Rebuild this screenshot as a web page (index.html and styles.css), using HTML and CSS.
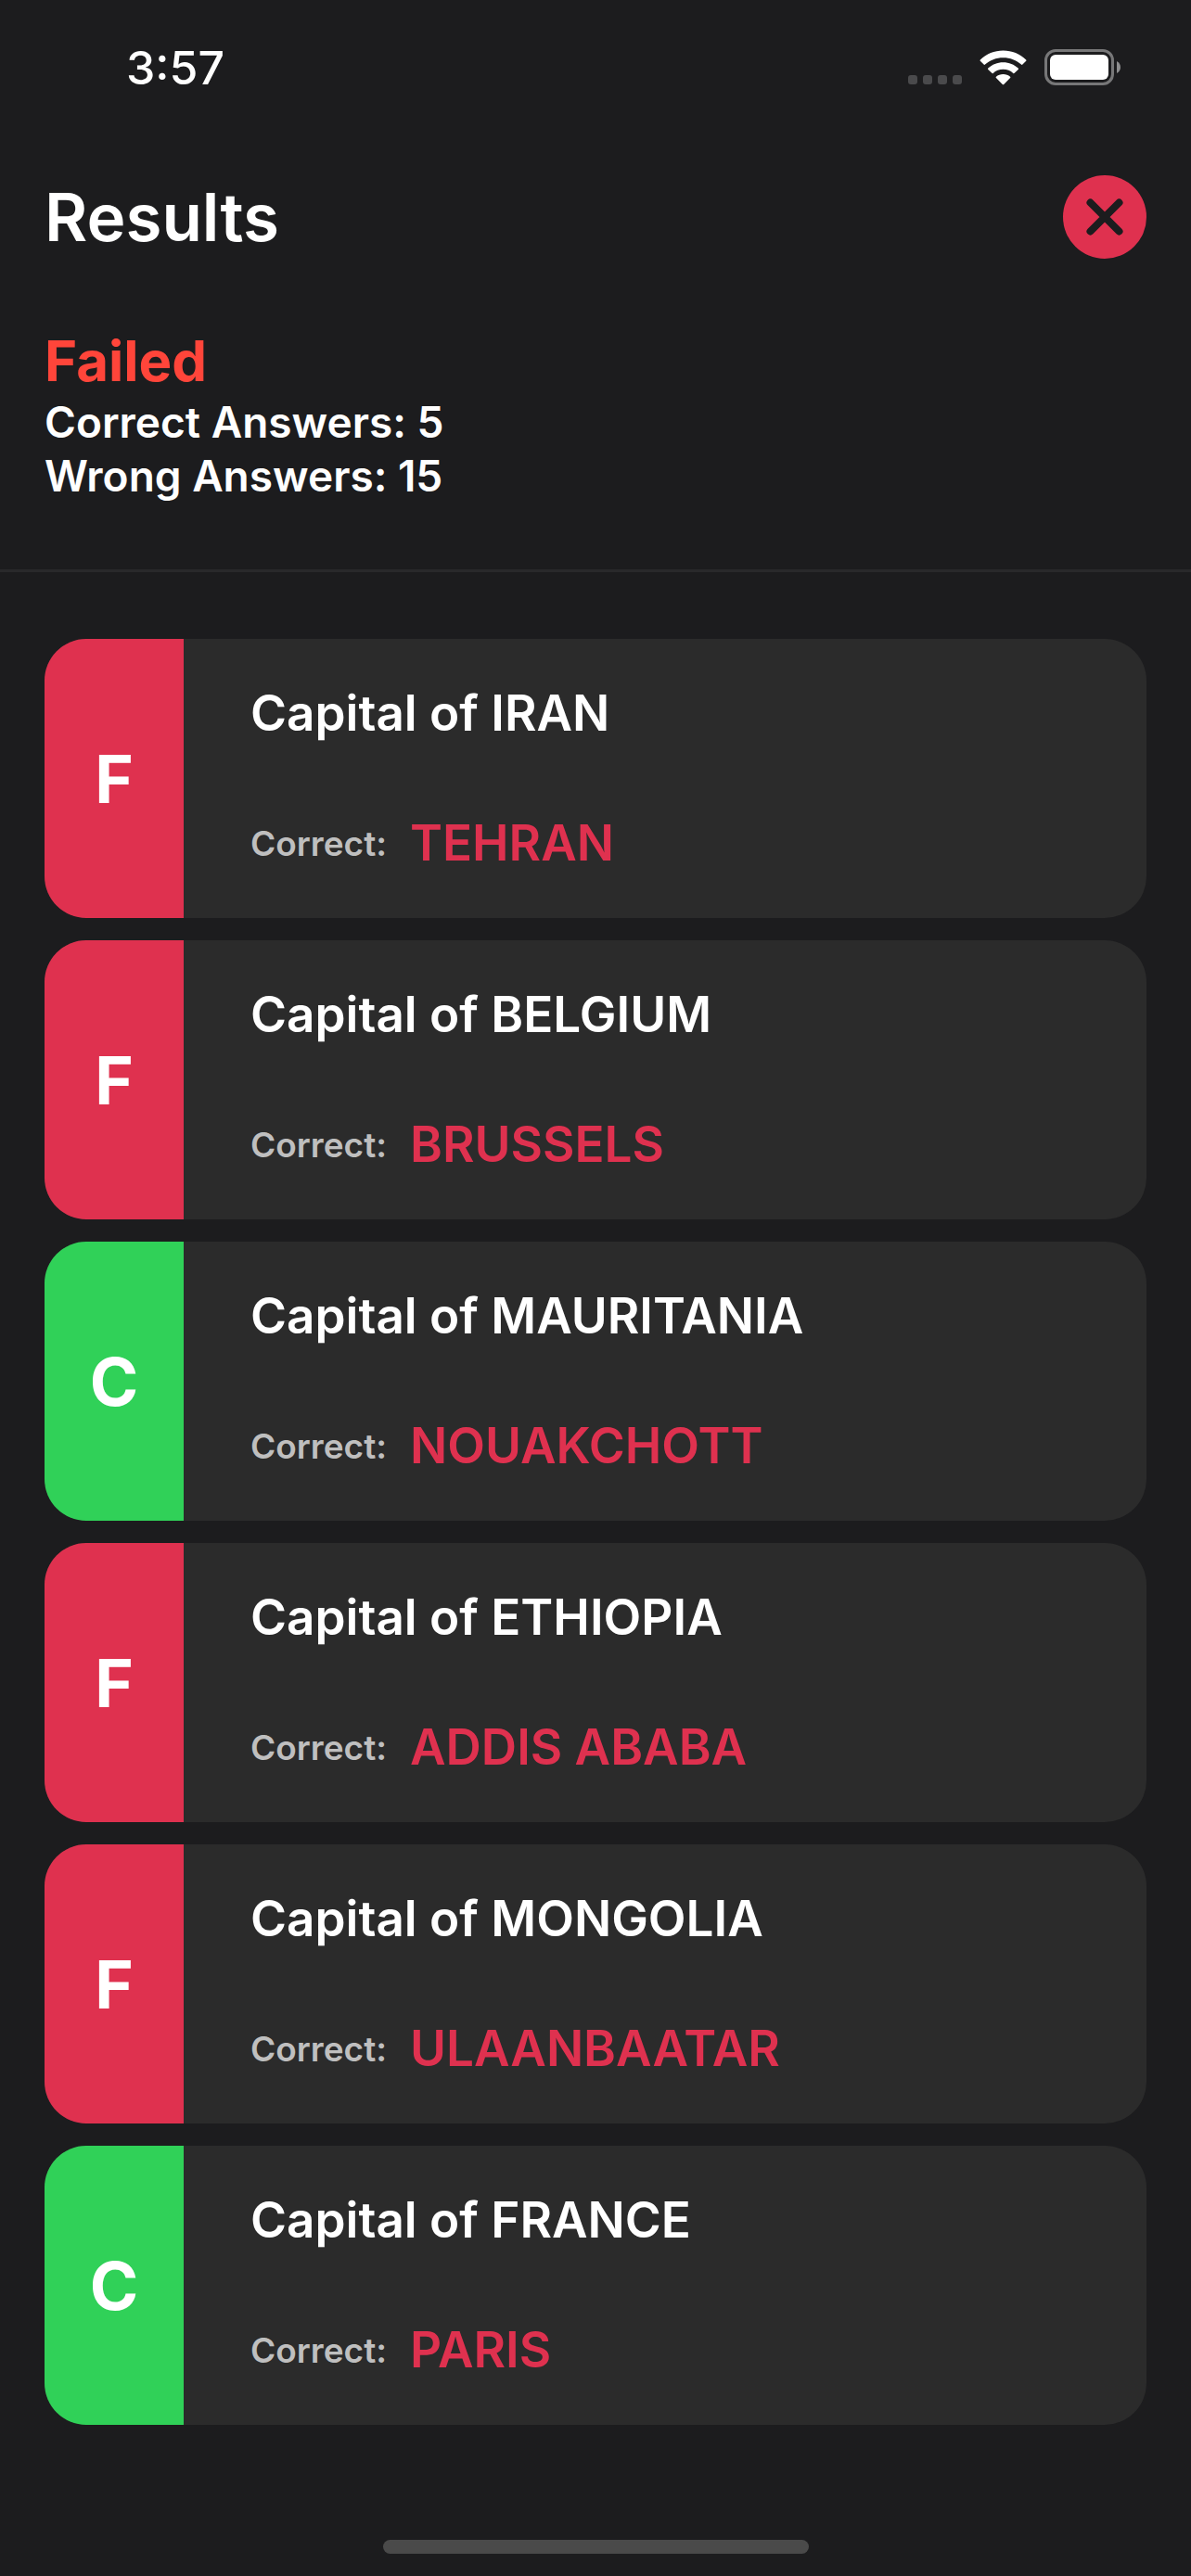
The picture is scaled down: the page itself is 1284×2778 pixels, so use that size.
FILE: index.html
```html
<!DOCTYPE html>
<html lang="en">
<head>
  <meta charset="utf-8">
  <meta name="viewport" content="width=device-width, initial-scale=1">
  <title>Results</title>
  <link rel="stylesheet" href="styles.css">
</head>
<body>
  <div class="status">
    <span class="clock">3:57</span>
    <div class="indicators">
      <svg class="signal" width="58" height="10" viewBox="0 0 58 10" aria-hidden="true">
        <rect width="10" height="10" rx="3"/><rect x="16" width="10" height="10" rx="3"/><rect x="32" width="10" height="10" rx="3"/><rect x="48" width="10" height="10" rx="3"/>
      </svg>
      <svg class="wifi" width="51" height="38" viewBox="0 0 51 38" aria-hidden="true">
        <path d="M25.500 .5C35 .5 43.700 4.200 50.200 10.400Q50.900 11.100 50.200 11.800L46.400 15.600Q45.700 16.300 45 15.600C39.900 10.800 33 8.200 25.500 8.200S11.100 10.800 6 15.600Q5.300 16.300 4.600 15.600L.8 11.800Q.1 11.100.8 10.400C7.300 4.200 16 .5 25.500 .5Z"/>
        <path d="M25.500 13.200C31.800 13.200 37.400 15.600 41.700 19.500Q42.400 20.200 41.700 20.900L37.700 24.800Q37 25.500 36.300 24.900C33.400 22.300 29.700 20.800 25.500 20.800S17.600 22.300 14.700 24.900Q14 25.500 13.300 24.800L9.300 20.900Q8.600 20.200 9.300 19.500C13.600 15.600 19.200 13.200 25.500 13.200Z"/>
        <path d="M25.500 26C28.400 26 31.100 27 33.100 28.700Q33.800 29.400 33.100 30.100L26.200 37Q25.500 37.700 24.800 37L17.900 30.100Q17.200 29.400 17.900 28.700C19.900 27 22.600 26 25.500 26Z"/>
      </svg>
      <svg class="battery" width="82" height="39" viewBox="0 0 82 39" aria-hidden="true">
        <rect class="battery-case" x="1.500" y="1.500" width="72" height="36" rx="10.500"/>
        <rect class="battery-level" x="6" y="6" width="63" height="27" rx="6"/>
        <path class="battery-tip" d="M78 13C83.300 15.500 83.300 23.500 78 26Z"/>
      </svg>
    </div>
  </div>

  <header class="header">
    <h1 class="title">Results</h1>
    <button class="close" type="button" aria-label="Close">
      <svg width="90" height="90" viewBox="0 0 90 90" aria-hidden="true"><path d="M29.500 29.500 60.500 60.500M60.500 29.500 29.500 60.500"/></svg>
    </button>
  </header>

  <section class="summary">
    <h2 class="verdict">Failed</h2>
    <p class="tally">Correct Answers: 5</p>
    <p class="tally">Wrong Answers: 15</p>
  </section>

  <main class="cards">
    <article class="card">
      <div class="mark wrong">F</div>
      <div class="details">
        <h3 class="question">Capital of IRAN</h3>
        <p class="answer"><span class="label">Correct:</span><span class="city">TEHRAN</span></p>
      </div>
    </article>
    <article class="card">
      <div class="mark wrong">F</div>
      <div class="details">
        <h3 class="question">Capital of BELGIUM</h3>
        <p class="answer"><span class="label">Correct:</span><span class="city">BRUSSELS</span></p>
      </div>
    </article>
    <article class="card">
      <div class="mark right">C</div>
      <div class="details">
        <h3 class="question">Capital of MAURITANIA</h3>
        <p class="answer"><span class="label">Correct:</span><span class="city">NOUAKCHOTT</span></p>
      </div>
    </article>
    <article class="card">
      <div class="mark wrong">F</div>
      <div class="details">
        <h3 class="question">Capital of ETHIOPIA</h3>
        <p class="answer"><span class="label">Correct:</span><span class="city">ADDIS ABABA</span></p>
      </div>
    </article>
    <article class="card">
      <div class="mark wrong">F</div>
      <div class="details">
        <h3 class="question">Capital of MONGOLIA</h3>
        <p class="answer"><span class="label">Correct:</span><span class="city">ULAANBAATAR</span></p>
      </div>
    </article>
    <article class="card">
      <div class="mark right">C</div>
      <div class="details">
        <h3 class="question">Capital of FRANCE</h3>
        <p class="answer"><span class="label">Correct:</span><span class="city">PARIS</span></p>
      </div>
    </article>
  </main>

  <div class="home-bar"></div>
</body>
</html>
```
FILE: styles.css
```css
:root {
  --background: #1c1c1e;
  --surface: #2b2b2b;
  --crimson: #df314f;
  --green: #30d158;
}

* {
  box-sizing: border-box;
  margin: 0;
}

body {
  display: flex;
  flex-direction: column;
  min-height: 100vh;
  padding-bottom: 24px;
  background: var(--background);
  color: #fff;
  font-family: Inter, "Liberation Sans", sans-serif;
  font-weight: 600;
}

.status {
  display: flex;
  align-items: center;
  justify-content: space-between;
  height: 145px;
  padding: 0 76px 0 136px;
}

.clock {
  font-size: 50px;
  font-weight: 500;
  line-height: 60px;
}

.indicators {
  display: flex;
  align-items: center;
  gap: 19px;
}

.signal {
  align-self: flex-end;
  margin-bottom: 1px;
  fill: #4a4a4c;
}

.wifi,
.battery-level {
  fill: #fff;
}

.battery-case {
  fill: none;
  stroke: #777778;
  stroke-width: 3;
}

.battery-tip {
  fill: #8e8e8f;
}

.header {
  display: flex;
  align-items: center;
  justify-content: space-between;
  height: 177px;
  padding: 0 48px;
}

.title {
  font-size: 71px;
  font-weight: 600;
  line-height: 88px;
}

.close {
  width: 90px;
  height: 90px;
  padding: 0;
  border: 0;
  border-radius: 50%;
  background: var(--crimson);
}

.close svg {
  display: block;
  fill: none;
  stroke: var(--background);
  stroke-width: 8;
  stroke-linecap: round;
}

.summary {
  padding: 30px 48px 72px;
  border-bottom: 3px solid #29292b;
}

.verdict {
  color: #ff453a;
  font-size: 60px;
  font-weight: 700;
  line-height: 74px;
}

.tally {
  font-size: 46px;
  font-weight: 600;
  line-height: 58px;
}

.cards {
  display: flex;
  flex-direction: column;
  gap: 24px;
  padding: 72px 48px;
}

.card {
  display: flex;
  overflow: hidden;
  border-radius: 45px;
  background: var(--surface);
}

.mark {
  display: grid;
  flex: none;
  place-items: center;
  width: 150px;
  font-size: 71px;
  font-weight: 700;
}

.wrong {
  background: var(--crimson);
}

.right {
  background: var(--green);
}

.details {
  display: flex;
  flex-direction: column;
  gap: 75px;
  padding: 48px 72px;
}

.question {
  font-size: 53px;
  font-weight: 600;
  line-height: 65px;
}

.answer {
  display: flex;
  align-items: center;
  gap: 25px;
  line-height: 65px;
}

.label {
  color: #bfbfbf;
  font-size: 37px;
}

.city {
  color: var(--crimson);
  font-size: 53px;
}

.home-bar {
  align-self: center;
  width: 459px;
  height: 15px;
  margin-top: auto;
  border-radius: 8px;
  background: #4a4a4a;
}
```
